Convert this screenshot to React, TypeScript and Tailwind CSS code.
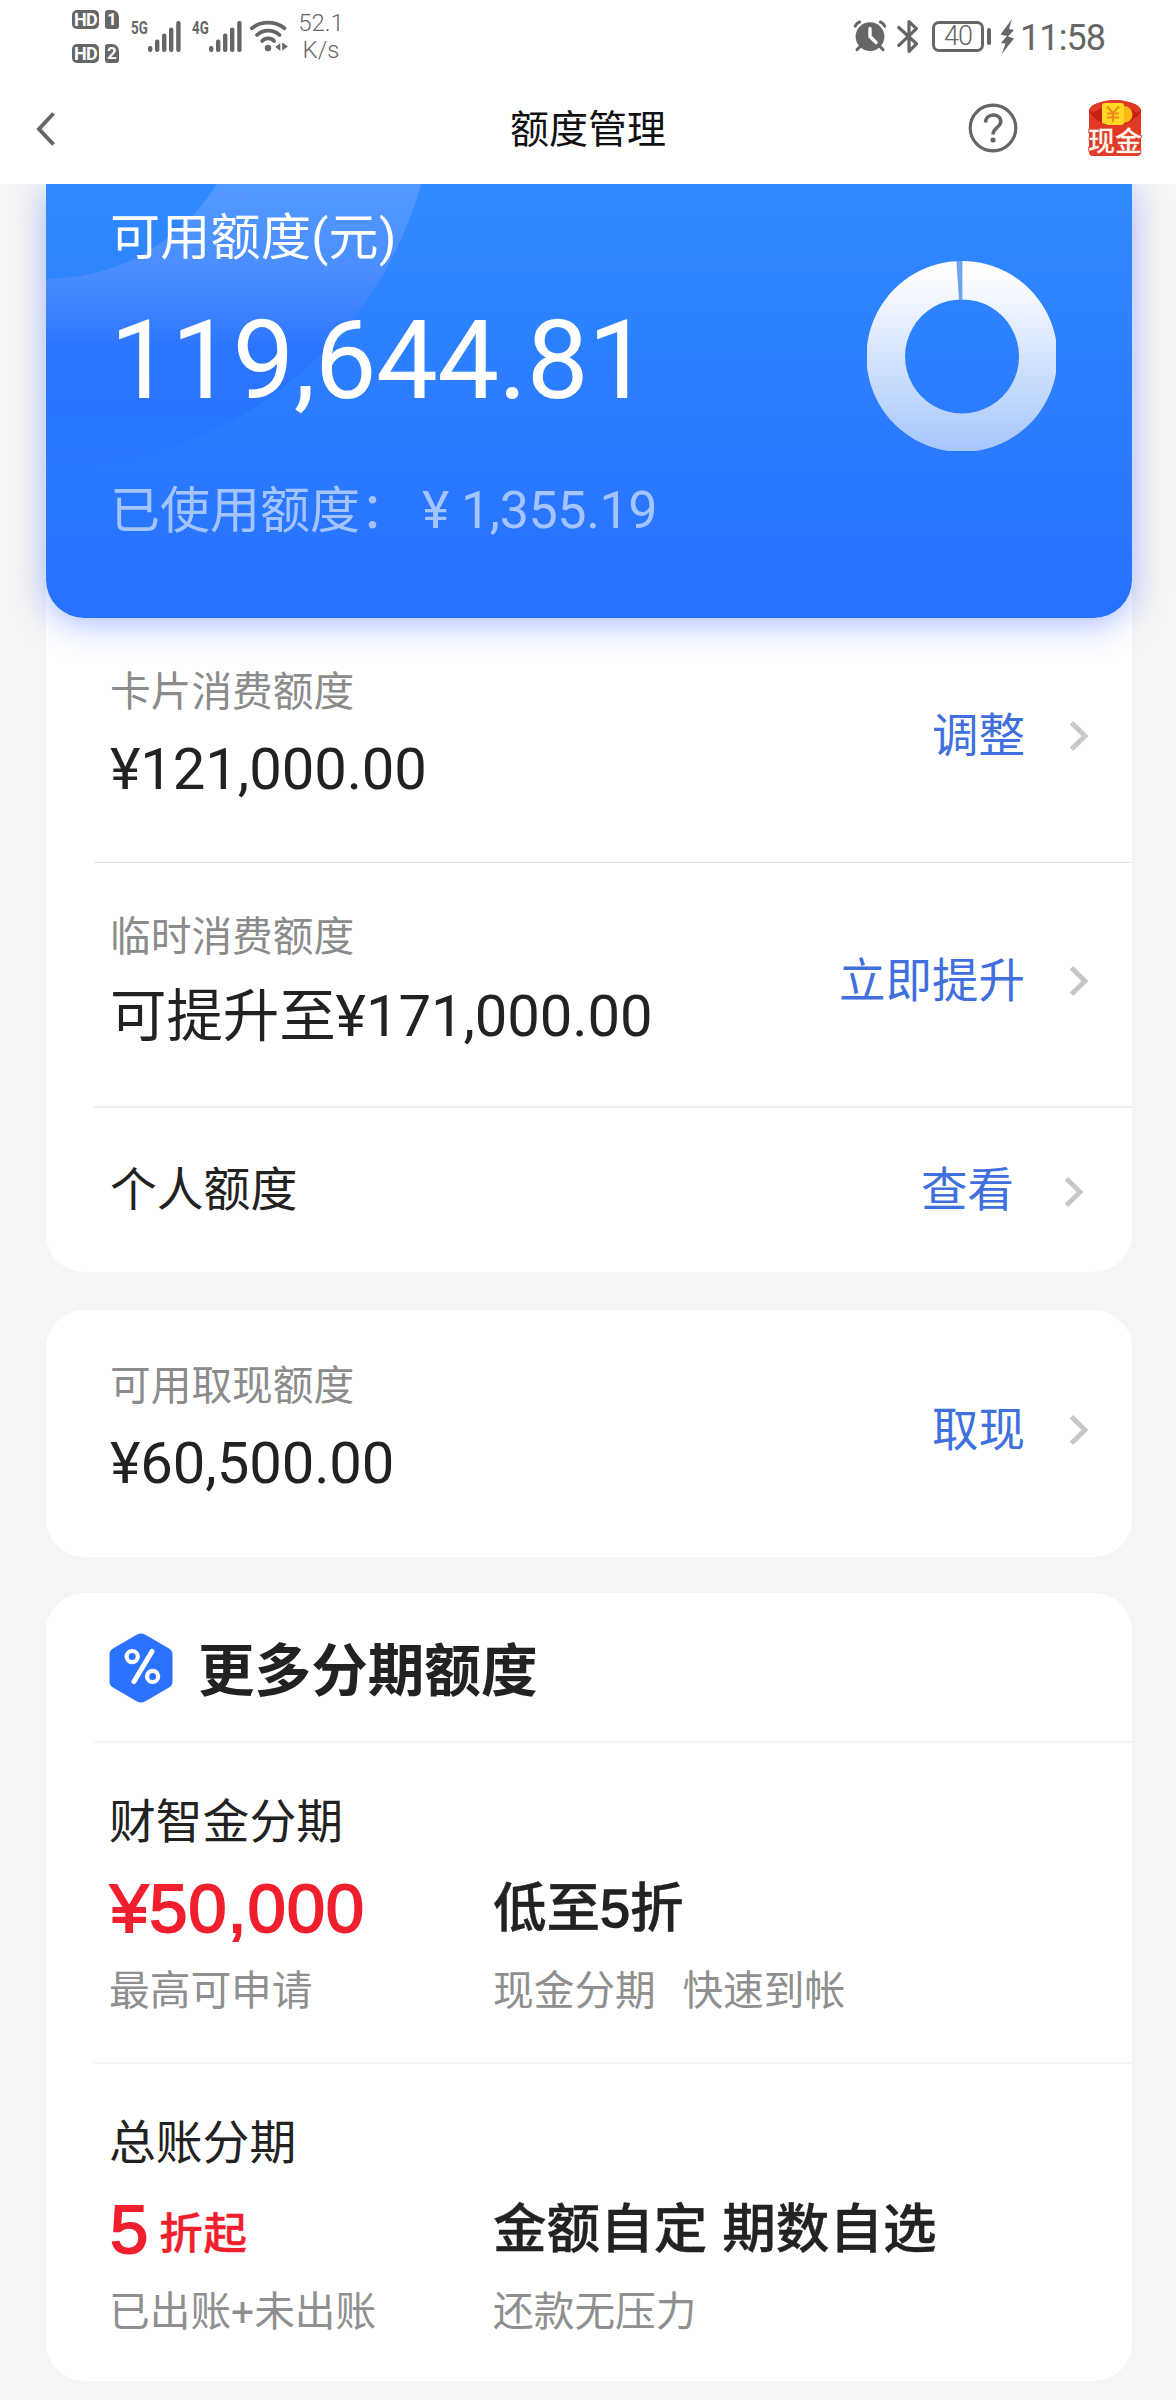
import type { ReactNode } from "react";

const GREY = "#666666";

function SignalBars() {
  return (
    <svg width="33" height="31" viewBox="0 0 33 31" fill={GREY}>
      <rect x="0" y="25" width="4.4" height="6" rx="2" />
      <rect x="7" y="18.5" width="4.4" height="12.5" rx="2" />
      <rect x="14" y="12.5" width="4.4" height="18.5" rx="2" />
      <rect x="21" y="6.5" width="4.4" height="24.5" rx="2" />
      <rect x="28.2" y="0" width="4.4" height="31" rx="2" />
    </svg>
  );
}

function WifiIcon() {
  return (
    <svg width="38" height="32" viewBox="0 0 38 32" fill="none" stroke={GREY} strokeWidth="3.8" strokeLinecap="round">
      <path d="M2 8.2 C11 0.8 25 0.8 34.5 8.2" />
      <path d="M7 15 C13 9.2 23.5 9.2 29.5 15" />
      <path d="M12.2 21 C15.5 17.6 21 17.6 24 21" />
      <circle cx="18" cy="28" r="3.2" fill={GREY} stroke="none" />
      <path d="M25.5 27 L30.3 23 V31 Z" fill={GREY} stroke="none" />
      <path d="M32.2 22.5 L38 26.6 L32.2 30.6 Z" fill={GREY} stroke="none" />
    </svg>
  );
}

function AlarmIcon() {
  return (
    <svg width="34" height="32" viewBox="0 0 34 32">
      <circle cx="17" cy="16.6" r="14.4" fill={GREY} />
      <g stroke={GREY} strokeWidth="3" strokeLinecap="round">
        <path d="M2.2 6.2 Q3.5 3.2 6.6 2" fill="none" />
        <path d="M31.8 6.2 Q30.5 3.2 27.4 2" fill="none" />
        <path d="M7.5 26 L4 29.6" />
        <path d="M26.5 26 L30 29.6" />
      </g>
      <path d="M17 8.5 V16.5 L23 22.5" fill="none" stroke="white" strokeWidth="3.4" strokeLinecap="round" />
    </svg>
  );
}

function BluetoothIcon() {
  return (
    <svg width="22" height="35" viewBox="0 0 22 35" fill="none" stroke={GREY} strokeWidth="3.2" strokeLinejoin="round" strokeLinecap="round">
      <path d="M1.8 8.5 L19.5 24.8 L12 32.4 V2.6 L19.5 9.6 L1.8 26.4" />
    </svg>
  );
}

function BoltIcon() {
  return (
    <svg width="15" height="35" viewBox="0 0 15 35" fill={GREY}>
      <path d="M12 0 L0.5 15.5 L7 17 L1 24 L5.5 24.5 L1.8 35 L14 19.5 L8 17.5 L14 11 L9 10 Z" />
    </svg>
  );
}

function HdBadge({ n }: { n: number }) {
  return (
    <div className="flex gap-[6px]">
      <div className="flex h-[19px] w-[27px] items-center justify-center rounded-[5px] bg-[#666666] text-[18px] leading-none font-bold tracking-[-0.8px] text-white">
        HD
      </div>
      <div className="flex h-[19px] w-[14px] items-center justify-center rounded-[3px] rounded-tr-[7px] bg-[#666666] text-[17px] leading-none font-bold text-white">
        {n}
      </div>
    </div>
  );
}

function StatusBar() {
  return (
    <div className="flex h-[72px] items-start pl-[72px] text-[#666666]">
      <div className="mt-[10px] flex flex-col gap-[15px]">
        <HdBadge n={1} />
        <HdBadge n={2} />
      </div>
      <div className="mt-[20px] ml-[12px] w-[17px] origin-left scale-x-[0.7] text-[19px] leading-[16px] font-bold">5G</div>
      <div className="mt-[21px]">
        <SignalBars />
      </div>
      <div className="mt-[20px] ml-[11px] w-[17px] origin-left scale-x-[0.7] text-[19px] leading-[16px] font-bold">4G</div>
      <div className="mt-[21px]">
        <SignalBars />
      </div>
      <div className="mt-[20px] ml-[8px]">
        <WifiIcon />
      </div>
      <div className="mt-[10px] ml-[9px] w-[48px] text-center text-[24px] leading-[27px] font-light">
        52.1
        <br />
        K/s
      </div>
      <div className="mt-[20px] ml-[508px]">
        <AlarmIcon />
      </div>
      <div className="mt-[19px] ml-[10px]">
        <BluetoothIcon />
      </div>
      <div className="mt-[21px] ml-[13px] flex h-[31px] w-[52px] items-center justify-center rounded-[7px] border-[3px] border-[#666666] text-[27px] leading-none font-light tracking-[-1px]">
        40
      </div>
      <div className="mt-[28px] ml-[3px] h-[17px] w-[4px] rounded-[2px] bg-[#666666]" />
      <div className="mt-[19px] ml-[9px]">
        <BoltIcon />
      </div>
      <div className="mt-[16px] ml-[5px] text-[36px] leading-[44px] tracking-[-0.9px]">11:58</div>
    </div>
  );
}

function CashPacket() {
  return (
    <svg width="54" height="57" viewBox="0 0 54 57">
      <path d="M1 10 Q3 5 10 3 Q27 -3 44 3 Q51 5 53 10 V44 H1 Z" fill="#c4200f" />
      <path d="M1 10 Q3 5 10 3 Q27 -3 44 3 Q51 5 53 10 L49 13 Q27 -3 5 13 Z" fill="#e03a26" />
      <circle cx="36" cy="14.5" r="8.5" fill="#f9b916" />
      <rect x="14" y="3" width="22" height="22" rx="2.5" fill="#ffd821" />
      <path d="M19 6.5 L25 13 L31 6.5 M19 13.5 H31 M19 17.5 H31 M25 13 V22" fill="none" stroke="#f08a1c" strokeWidth="2.2" />
      <path d="M1 12 Q10 23 20 25 H34 Q44 23 53 12 V52 Q53 56 49 56 H5 Q1 56 1 52 Z" fill="#e23826" />
      <text
        x="27"
        y="51"
        textAnchor="middle"
        fontSize="27"
        fontWeight="500"
        fill="#fff4ea"
        stroke="#dc4a38"
        strokeWidth="2"
        paintOrder="stroke"
      >
        现金
      </text>
    </svg>
  );
}

function NavBar() {
  return (
    <div className="grid h-[112px] grid-cols-[1fr_auto_1fr] items-start">
      <svg className="mt-[40px] ml-[36px]" width="19" height="34" viewBox="0 0 19 34" fill="none" stroke={GREY} strokeWidth="4">
        <path d="M17.5 1.5 L3 17 L17.5 32.5" />
      </svg>
      <h1 className="mt-[28px] text-[39px] leading-[60px] text-[#111111]">额度管理</h1>
      <div className="flex justify-end pr-[34px]">
        <svg className="mt-[31px]" width="50" height="50" viewBox="0 0 50 50" fill="none" stroke={GREY}>
          <circle cx="25" cy="25" r="22.8" strokeWidth="3.2" />
          <path d="M17.6 19.6 C17.6 9.6 32.8 9.6 32.8 18.6 C32.8 24.4 25 24.4 25 31.5" strokeWidth="3.6" />
          <circle cx="25" cy="37" r="2.6" fill={GREY} stroke="none" />
        </svg>
        <div className="mt-[28px] ml-[70px]">
          <CashPacket />
        </div>
      </div>
    </div>
  );
}

function Donut() {
  return (
    <svg width="189" height="190" viewBox="0 0 189 190">
      <defs>
        <linearGradient id="donut" x1="0" y1="0" x2="0" y2="1">
          <stop offset="0.05" stopColor="#ffffff" />
          <stop offset="1" stopColor="#a6c6fc" />
        </linearGradient>
      </defs>
      <path
        fillRule="evenodd"
        fill="url(#donut)"
        d="M95 0 A95.5 95.5 0 1 1 94.9 0 Z M95 38.4 A57 57 0 1 0 95.1 38.4 Z"
      />
      <path d="M89.4 0 H95.4 V39 H92 Z" fill="#6ea3f3" />
    </svg>
  );
}

// Ring in the top left corner of the balance card, fading into the card colour
function CardRing() {
  return (
    <svg className="absolute top-0 left-0" width="400" height="300" viewBox="0 0 400 300">
      <defs>
        <linearGradient id="ring" gradientUnits="userSpaceOnUse" x1="0" y1="0" x2="0" y2="284">
          <stop offset="0" stopColor="#5299ff" />
          <stop offset="0.3" stopColor="#4a8eff" />
          <stop offset="0.44" stopColor="#3e82ff" />
          <stop offset="0.57" stopColor="#2c76ff" />
          <stop offset="0.8" stopColor="#2875ff" />
          <stop offset="1" stopColor="#2b79ff" />
        </linearGradient>
      </defs>
      <circle cx="0" cy="-106" r="295.5" fill="none" stroke="url(#ring)" strokeWidth="189" />
    </svg>
  );
}

function BalanceCard() {
  return (
    <div className="relative flex h-[434px] justify-between rounded-b-[38px] bg-linear-to-b from-[#308aff] to-[#2870ff] pr-[76px] pl-[64px] text-white shadow-[0_6px_34px_rgba(50,95,255,0.42)]">
      <CardRing />
      <div className="relative">
        <div className="mt-[24px] text-[50px] leading-[60px] tracking-[0.3px] whitespace-nowrap">可用额度(元)</div>
        <div className="mt-[33px] text-[110px] leading-[120px] tracking-[-0.6px]">119,644.81</div>
        <div className="mt-[60px] flex text-[50px] leading-[60px] whitespace-nowrap text-[#a4c4ff]">
          <span className="w-[312px]">已使用额度：</span>
          <span className="w-[39px] text-[52px]">¥</span>
          <span className="text-[52px] tracking-[-0.4px]">1,355.19</span>
        </div>
      </div>
      <div className="relative pt-[77px]">
        <Donut />
      </div>
    </div>
  );
}

function Chevron() {
  return (
    <svg width="18" height="30" viewBox="0 0 18 30" fill="none" stroke="#c7c7cb" strokeWidth="4.8">
      <path d="M1.5 1.8 L15 15 L1.5 28.2" />
    </svg>
  );
}

function LimitRow({ label, value, action, className }: { label: string; value: ReactNode; action: string; className: string }) {
  return (
    <div className={`ml-12 flex items-start justify-between pr-[44px] pl-4 ${className}`}>
      <div>
        <div className="text-[40.7px] leading-[50px] text-[#8b8b8b]">{label}</div>
        <div className="mt-[17px] text-[58px] leading-[70px] tracking-[-0.1px] whitespace-nowrap text-[#222222]">{value}</div>
      </div>
      <div className="mt-[39px] flex items-center gap-[45px] text-[46.5px] leading-[60px] text-[#4070de]">
        {action}
        <Chevron />
      </div>
    </div>
  );
}

function PercentIcon() {
  return (
    <svg width="64" height="70" viewBox="0 0 64 70">
      <path
        d="M28 1.6 Q32 -0.6 36 1.6 L60 15.5 Q63.5 17.5 63.5 21.5 V48.5 Q63.5 52.5 60 54.5 L36 68.4 Q32 70.6 28 68.4 L4 54.5 Q0.5 52.5 0.5 48.5 V21.5 Q0.5 17.5 4 15.5 Z"
        fill="#2a72ff"
      />
      <g fill="none" stroke="white" strokeWidth="4.2" strokeLinecap="round">
        <circle cx="23.2" cy="23.6" r="5.6" />
        <circle cx="43.6" cy="43.4" r="5.6" />
        <path d="M43 18.5 L25 48.5" strokeWidth="5" />
      </g>
    </svg>
  );
}

function InstallmentItem({ title, amount, note, headline, detail }: { title: string; amount: ReactNode; note: string; headline: ReactNode; detail: string }) {
  return (
    <div className="ml-12 grid grid-cols-[384px_1fr] pt-[49px] pl-[15px] text-[40.7px] text-[#8f8f8f]">
      <div className="col-span-2 text-[46.8px] leading-[60px] text-[#222222]">{title}</div>
      <div className="mt-[17px] ml-px flex h-[80px] items-baseline font-['Liberation_Sans','Noto_Sans_CJK_SC',sans-serif] text-[69px] leading-[80px] font-medium tracking-[0.8px] text-[#f01f2d] [-webkit-text-stroke:1.8px_#f01f2d]">
        {amount}
      </div>
      <div className="mt-[16px] mb-px font-['Liberation_Sans','Noto_Sans_CJK_SC',sans-serif] text-[53.6px] leading-[80px] font-medium text-[#222222] [-webkit-text-stroke:0.4px_#222222]">
        {headline}
      </div>
      <div className="mt-[17px] leading-[50px] whitespace-pre">{note}</div>
      <div className="mt-[17px] leading-[50px] [word-spacing:-1.2px] whitespace-pre">{detail}</div>
    </div>
  );
}

export default function App() {
  return (
    <div className="h-[2400px] w-[1176px] overflow-hidden bg-[#f5f5f5] font-[Roboto,'Noto_Sans_CJK_SC',sans-serif]">
      <header className="relative z-10 bg-white">
        <StatusBar />
        <NavBar />
      </header>

      <main className="ml-[46px] w-[1086px]">
        <section className="rounded-b-[38px] bg-white">
          <BalanceCard />
          <LimitRow
            className="h-[245px] border-b border-[#e4e4e4] pt-[49px]"
            label="卡片消费额度"
            value="¥121,000.00"
            action="调整"
          />
          <LimitRow
            className="h-[245px] border-b-2 border-[#eeeeee] pt-[49px]"
            label="临时消费额度"
            value={
              <div className="pt-[2px]">
                <span className="text-[56.5px]">可提升至</span>¥171,000.00
              </div>
            }
            action="立即提升"
          />
          <div className="flex h-[164px] items-center justify-between pr-[49px] pl-[64px] text-[46.8px] leading-[60px]">
            <span className="text-[#222222]">个人额度</span>
            <div className="flex items-center gap-[51px] text-[46.5px] text-[#4070de]">
              查看
              <div className="pt-[4px]">
                <Chevron />
              </div>
            </div>
          </div>
        </section>

        <section className="mt-[38px] h-[247px] rounded-[38px] bg-white">
          <LimitRow className="pt-[51px]" label="可用取现额度" value="¥60,500.00" action="取现" />
        </section>

        <section className="mt-[36px] h-[788px] rounded-[38px] bg-white">
          <div className="ml-12 flex h-[150px] items-start border-b-2 border-[#f5f5f5] pt-[40px] pl-[15px]">
            <PercentIcon />
            <h2 className="mt-[4px] ml-[25px] text-[56.6px] leading-[70px] font-bold text-[#222222]">更多分期额度</h2>
          </div>
          <div className="h-[321px]">
            <InstallmentItem
              title="财智金分期"
              amount="¥50,000"
              note="最高可申请"
              headline={
                <>
                  低至<span className="[-webkit-text-stroke:1.6px_#222222]">5</span>折
                </>
              }
              detail={"现金分期   快速到帐"}
            />
          </div>
          <div className="ml-12 h-[2px] -translate-y-[2px] bg-[#f5f5f5]" />
          <div className="-mt-[2px]">
            <InstallmentItem
              title="总账分期"
              amount={
                <>
                  5<span className="ml-[10px] self-end pb-[11px] text-[43.5px] leading-[50px] [-webkit-text-stroke:0.4px_#f01f2d]">折起</span>
                </>
              }
              note="已出账+未出账"
              headline="金额自定 期数自选"
              detail="还款无压力"
            />
          </div>
        </section>
      </main>
    </div>
  );
}
